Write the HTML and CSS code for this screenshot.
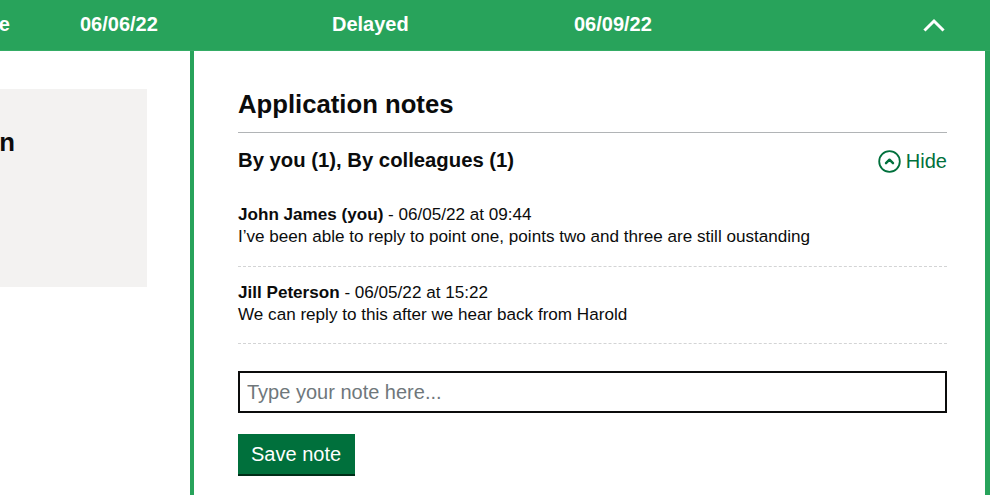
FILE: index.html
```html
<!DOCTYPE html>
<html lang="en">
<head>
<meta charset="utf-8">
<title>Application notes</title>
<link rel="stylesheet" href="styles.css">
</head>
<body>
<header class="status-bar">
  <div class="cell cell-clipped"><span>Overdue</span></div>
  <div class="cell">06/06/22</div>
  <div class="cell">Delayed</div>
  <div class="cell">06/09/22</div>
  <div class="cell cell-toggle">
    <svg class="chevron" width="22" height="14" viewBox="0 0 22 14" aria-hidden="true">
      <polyline points="2.5,11.5 11,3 19.5,11.5" fill="none" stroke="#ffffff" stroke-width="3" stroke-linecap="square"/>
    </svg>
  </div>
</header>

<main class="layout">
  <aside class="side">
    <div class="side-box">
      <div class="side-title"><span>Decision</span></div>
    </div>
  </aside>

  <section class="panel">
    <h2 class="panel-title">Application notes</h2>
    <div class="notes-head">
      <h3 class="notes-count">By you (1), By colleagues (1)</h3>
      <a class="hide-link" href="#">
        <svg width="23" height="23" viewBox="0 0 23 23" aria-hidden="true">
          <circle cx="11.5" cy="11.5" r="10.3" fill="none" stroke="#00703c" stroke-width="1.8"/>
          <polyline points="8,13.2 11.5,9.7 15,13.2" fill="none" stroke="#00703c" stroke-width="2.4" stroke-linecap="round" stroke-linejoin="round"/>
        </svg>
        <span>Hide</span>
      </a>
    </div>

    <ul class="notes">
      <li class="note">
        <p class="note-meta"><strong>John James (you)</strong> - 06/05/22 at 09:44</p>
        <p class="note-text">I’ve been able to reply to point one, points two and three are still oustanding</p>
      </li>
      <li class="note">
        <p class="note-meta"><strong>Jill Peterson</strong> - 06/05/22 at 15:22</p>
        <p class="note-text">We can reply to this after we hear back from Harold</p>
      </li>
    </ul>

    <input class="note-input" type="text" placeholder="Type your note here...">
    <button class="btn" type="button">Save note</button>
  </section>
</main>
</body>
</html>
```

FILE: styles.css
```css
* { box-sizing: border-box; }

html, body {
  margin: 0;
  padding: 0;
  background: #ffffff;
  overflow: hidden;
}

body {
  font-family: "Liberation Sans", Arial, sans-serif;
  color: #0b0c0c;
  height: 495px;
  display: flex;
  flex-direction: column;
}

.status-bar {
  height: 51px;
  flex: 0 0 51px;
  background: #28a35b;
  border-bottom: 1px solid #34ac65;
  color: #ffffff;
  display: grid;
  grid-template-columns: 80px 252px 242px 1fr auto;
  align-items: center;
  padding: 0 45px 2px 0;
  font-size: 20px;
  font-weight: 700;
}

.cell-clipped {
  width: 10px;
  display: flex;
  justify-content: flex-end;
  white-space: nowrap;
}

.cell-toggle {
  display: flex;
  align-items: center;
}

.chevron { display: block; margin-top: 1px; }

.layout {
  flex: 1;
  display: flex;
  min-height: 0;
}

.side {
  width: 190px;
  flex: 0 0 190px;
  padding-top: 38px;
}

.side-box {
  width: 147px;
  height: 198px;
  background: #f3f2f1;
  padding-top: 38px;
}

.side-title {
  width: 15px;
  display: flex;
  justify-content: flex-end;
  white-space: nowrap;
  font-size: 25.7px;
  font-weight: 700;
  line-height: 31px;
}

.panel {
  flex: 1;
  border-left: 4px solid #28a35b;
  border-right: 5px solid #28a35b;
  padding: 38px 38px 0 44px;
  display: flex;
  flex-direction: column;
  align-items: flex-start;
}

.panel-title {
  margin: 0;
  font-size: 25.7px;
  line-height: 31px;
  font-weight: 700;
  width: 100%;
  padding-bottom: 12px;
  border-bottom: 1px solid #b1b4b6;
}

.notes-head {
  width: 100%;
  display: flex;
  justify-content: space-between;
  align-items: center;
  margin-top: 14px;
}

.notes-count {
  margin: 0;
  font-size: 20.3px;
  line-height: 25px;
  font-weight: 700;
}

.hide-link {
  display: flex;
  align-items: center;
  gap: 5px;
  color: #00703c;
  text-decoration: none;
  font-size: 20px;
  line-height: 25px;
  margin-top: 2px;
}

.hide-link svg { display: block; }

.notes {
  list-style: none;
  margin: 14px 0 0;
  padding: 0;
  width: 100%;
}

.note {
  padding: 15px 0 17px;
  border-bottom: 1px dashed #d3d4d5;
}

.note:first-child { padding: 16px 0 18px; }

.note p {
  margin: 0;
  font-size: 17.1px;
  line-height: 22px;
}

.note-meta strong { font-weight: 700; }

.note-input {
  margin-top: 27px;
  width: 100%;
  height: 42px;
  border: 2px solid #0b0c0c;
  border-radius: 0;
  padding: 0 7px;
  font-family: "Liberation Sans", Arial, sans-serif;
  font-size: 20px;
  color: #0b0c0c;
  outline: none;
}

.note-input::placeholder { color: #6f777b; }

.btn {
  margin-top: 21px;
  height: 40px;
  padding: 0 14px 0 13px;
  border: 0;
  border-radius: 0;
  background: #00703c;
  box-shadow: 0 2px 0 #002d18;
  color: #ffffff;
  font-family: "Liberation Sans", Arial, sans-serif;
  font-size: 20px;
  line-height: 1;
  cursor: pointer;
}
```
